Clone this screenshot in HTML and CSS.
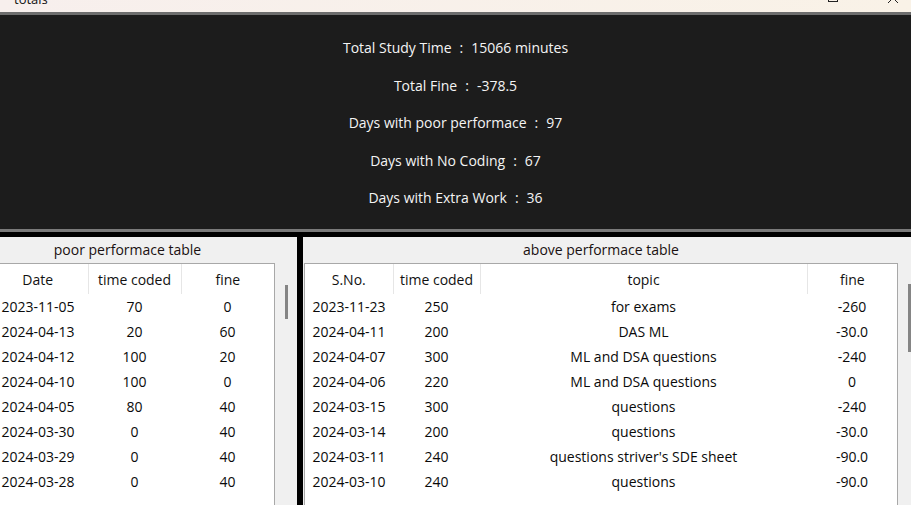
FILE: index.html
```html
<!DOCTYPE html>
<html>
<head>
<meta charset="utf-8">
<link rel="stylesheet" href="styles.css">
</head>
<body>
<div class="window">
  <div class="titlebar">
    <span class="title">totals</span>
    <span class="spacer"></span>
    <svg class="tb-icon max" width="12" height="12" viewBox="0 0 12 12"><rect x="1.5" y="1.5" width="9" height="9" fill="none" stroke="#222" stroke-width="1"/></svg>
    <svg class="tb-icon close" width="12" height="12" viewBox="0 0 12 12"><path d="M1 1 L11 11 M11 1 L1 11" stroke="#222" stroke-width="1"/></svg>
  </div>
  <div class="summary">
    <div class="line"><span>Total Study Time</span><span>:</span><span>15066 minutes</span></div>
    <div class="line"><span>Total Fine</span><span>:</span><span>-378.5</span></div>
    <div class="line"><span>Days with poor performace</span><span>:</span><span>97</span></div>
    <div class="line"><span>Days with No Coding</span><span>:</span><span>67</span></div>
    <div class="line"><span>Days with Extra Work</span><span>:</span><span>36</span></div>
  </div>
  <div class="tables">
    <div class="panel left">
      <div class="panel-title left-title">poor performace table</div>
      <div class="panel-body">
        <div class="table-box poor-box">
          <table class="grid poor">
            <colgroup><col class="c-date"><col class="c-93"><col class="c-93"></colgroup>
            <thead><tr><th class="first">Date</th><th>time coded</th><th>fine</th></tr></thead>
            <tbody>
              <tr><td class="first">2023-11-05</td><td>70</td><td>0</td></tr>
              <tr><td class="first">2024-04-13</td><td>20</td><td>60</td></tr>
              <tr><td class="first">2024-04-12</td><td>100</td><td>20</td></tr>
              <tr><td class="first">2024-04-10</td><td>100</td><td>0</td></tr>
              <tr><td class="first">2024-04-05</td><td>80</td><td>40</td></tr>
              <tr><td class="first">2024-03-30</td><td>0</td><td>40</td></tr>
              <tr><td class="first">2024-03-29</td><td>0</td><td>40</td></tr>
              <tr><td class="first">2024-03-28</td><td>0</td><td>40</td></tr>
            </tbody>
          </table>
        </div>
        <div class="scroll left-scroll"><div class="thumb"></div></div>
      </div>
    </div>
    <div class="panel right">
      <div class="panel-title right-title">above performace table</div>
      <div class="panel-body">
        <div class="table-box above-box">
          <table class="grid above">
            <colgroup><col class="c-sno"><col class="c-time"><col class="c-topic"><col class="c-fine"></colgroup>
            <thead><tr><th>S.No.</th><th>time coded</th><th>topic</th><th>fine</th></tr></thead>
            <tbody>
              <tr><td>2023-11-23</td><td>250</td><td>for exams</td><td>-260</td></tr>
              <tr><td>2024-04-11</td><td>200</td><td>DAS ML</td><td>-30.0</td></tr>
              <tr><td>2024-04-07</td><td>300</td><td>ML and DSA questions</td><td>-240</td></tr>
              <tr><td>2024-04-06</td><td>220</td><td>ML and DSA questions</td><td>0</td></tr>
              <tr><td>2024-03-15</td><td>300</td><td>questions</td><td>-240</td></tr>
              <tr><td>2024-03-14</td><td>200</td><td>questions</td><td>-30.0</td></tr>
              <tr><td>2024-03-11</td><td>240</td><td>questions striver's SDE sheet</td><td>-90.0</td></tr>
              <tr><td>2024-03-10</td><td>240</td><td>questions</td><td>-90.0</td></tr>
            </tbody>
          </table>
        </div>
        <div class="scroll right-scroll"><div class="thumb"></div></div>
      </div>
    </div>
  </div>
</div>
</body>
</html>
```

FILE: styles.css
```css
* { box-sizing: border-box; }
html, body { margin: 0; padding: 0; }
body {
  width: 911px;
  height: 505px;
  overflow: hidden;
  background: #000;
  font-family: "Open Sans", "Noto Sans", sans-serif;
  font-size: 14px;
}
.window { display: flex; flex-direction: column; height: 505px; }

.titlebar {
  height: 15px;
  flex: none;
  overflow: hidden;
  display: flex;
  align-items: flex-start;
  background: linear-gradient(90deg, #f7efed, #f9f2e7);
  border-bottom: 3px solid #6d6d6d;
  padding-left: 14px;
}
.title {
  font-size: 13px;
  line-height: 16px;
  margin-top: -9px;
  color: #111;
}
.spacer { flex: 1; }
.tb-icon { margin-top: -9px; flex: none; }
.max { margin-right: 48px; }
.close { margin-right: 12px; margin-top: -8px; }

.summary {
  height: 217px;
  flex: none;
  background: #1c1c1c;
  border-bottom: 3px solid #7a7a7a;
  padding-top: 23px;
  display: flex;
  flex-direction: column;
  align-items: center;
  gap: 17.5px;
  color: #f4f4f4;
}
.line {
  display: flex;
  gap: 8px;
  line-height: 20px;
  height: 20px;
}

.tables {
  flex: 1;
  display: flex;
  gap: 6px;
  padding-top: 5px;
  min-height: 0;
}
.panel {
  background: #f0f0f0;
  display: flex;
  flex-direction: column;
  min-height: 0;
}
.panel.left { width: 297px; flex: none; }
.panel.right { flex: 1; padding-left: 1px; }
.panel-title {
  height: 26px;
  line-height: 26px;
  text-align: center;
  color: #1a1010;
  flex: none;
}
.left-title { width: 275px; padding-right: 20px; }
.right-title { width: 594px; }

.panel-body { display: flex; flex: 1; min-height: 0; }

.table-box {
  background: #fff;
  border-top: 1px solid #a8a8a8;
  border-right: 1px solid #a8a8a8;
  flex: none;
}
.poor-box { width: 275px; }
.above-box { width: 594px; border-left: 1px solid #a8a8a8; }

.grid {
  border-collapse: collapse;
  table-layout: fixed;
  width: 100%;
  color: #0a0a0a;
}
.c-date { width: 88px; }
.c-93 { width: 93px; }
.c-sno { width: 88px; }
.c-time { width: 87px; }
.c-topic { width: 327px; }
.c-fine { width: 90px; }

.grid th {
  height: 30px;
  font-weight: normal;
  padding: 0;
  text-align: center;
  border-right: 1px solid #e6e6e6;
  white-space: nowrap;
  color: #111;
}
.grid th:last-child { border-right: none; }
.grid td {
  height: 25px;
  padding: 0;
  text-align: center;
  white-space: nowrap;
}
.grid .first { padding-right: 12px; }

.scroll { flex: none; padding-left: 10px; }
.left-scroll { width: 22px; padding-top: 22px; }
.right-scroll { width: 16px; padding-top: 21px; padding-left: 10px; }
.thumb { background: #858585; }
.left-scroll .thumb { width: 3px; height: 34px; }
.right-scroll .thumb { width: 3px; height: 68px; }
```
